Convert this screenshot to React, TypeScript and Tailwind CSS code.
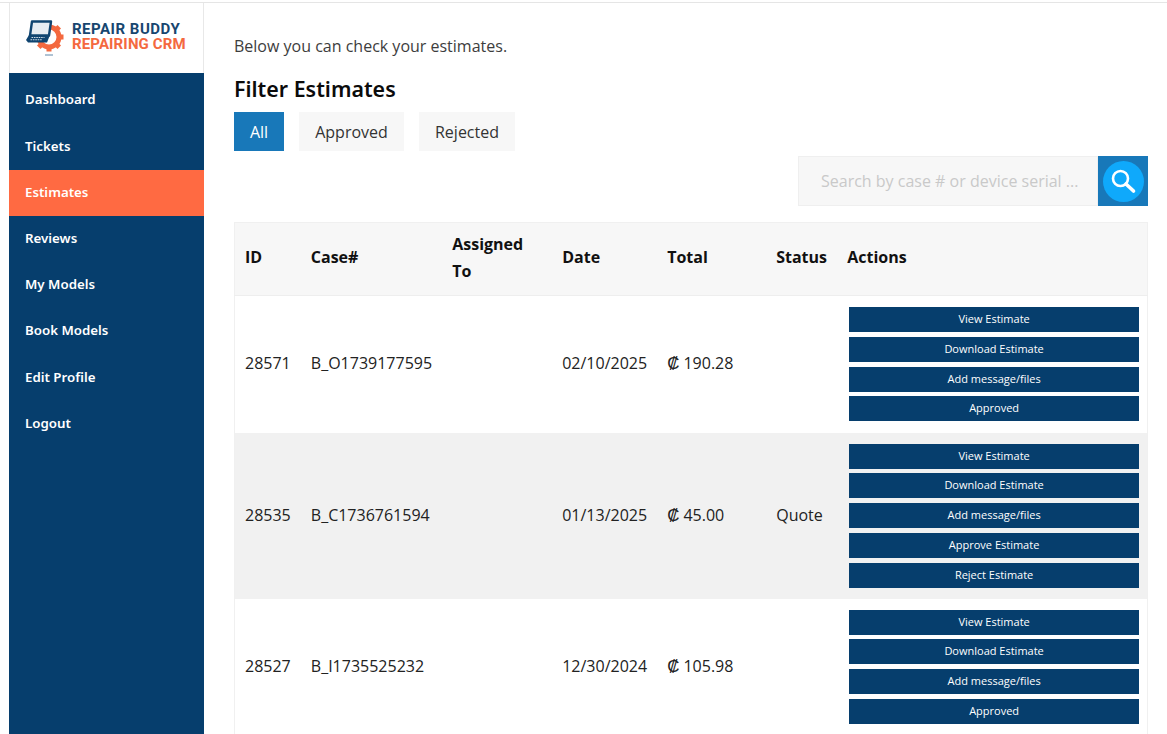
const navItems = ["Dashboard", "Tickets", "Estimates", "Reviews", "My Models", "Book Models", "Edit Profile", "Logout"];

const rows = [
  {
    id: "28571",
    caseNo: "B_O1739177595",
    date: "02/10/2025",
    total: "190.28",
    status: "",
    actions: ["View Estimate", "Download Estimate", "Add message/files", "Approved"],
  },
  {
    id: "28535",
    caseNo: "B_C1736761594",
    date: "01/13/2025",
    total: "45.00",
    status: "Quote",
    actions: ["View Estimate", "Download Estimate", "Add message/files", "Approve Estimate", "Reject Estimate"],
  },
  {
    id: "28527",
    caseNo: "B_I1735525232",
    date: "12/30/2024",
    total: "105.98",
    status: "",
    actions: ["View Estimate", "Download Estimate", "Add message/files", "Approved"],
  },
];

const gearAngles = [0, 45, 90, 135, 180, 225, 270, 315];

function Logo() {
  return (
    <div className="flex items-center gap-[6px]">
      <svg width="41" height="38" viewBox="0 0 41 38" className="shrink-0">
        {/* gear */}
        <circle cx="24" cy="18" r="10" fill="none" stroke="#f4693f" strokeWidth="5" />
        {gearAngles.map((a) => (
          <rect key={a} x="21.5" y="3.5" width="5" height="5" fill="#f4693f" transform={`rotate(${a} 24 18)`} />
        ))}
        {/* laptop */}
        <path d="M7 2.5h19l-2 14H5z" fill="#e6ecf2" stroke="#0f4470" strokeWidth="2.4" strokeLinejoin="round" />
        <path d="M4 16h21l-3 7.5H3L1 21z" fill="#0f4470" />
        <path d="M6.5 18.5h13M5.5 20.8h12" stroke="#cfdbe6" strokeWidth="1.1" strokeDasharray="1.6 0.8" />
        <path d="M20 36h8" stroke="#5f86a8" strokeWidth="1" />
      </svg>
      <div className="font-['Roboto',sans-serif] font-bold text-[15px] leading-[15px] -mt-[2px]">
        <div className="text-[#17466f] tracking-[0.5px]">REPAIR BUDDY</div>
        <div className="text-[#f4693f] tracking-[0.13px]">REPAIRING CRM</div>
      </div>
    </div>
  );
}

export default function App() {
  return (
    <div className="h-screen overflow-hidden bg-white font-['Open_Sans',sans-serif] text-[16px] text-[#222]">
      <div className="h-[2px] bg-white border-t border-[#e5e5e5] mt-[2px] -mb-[1px]" />
      <div className="flex h-full pl-[9px]">
        {/* sidebar */}
        <aside className="w-[195px] shrink-0 bg-[#063e6d]">
          <div className="h-[70px] bg-white border-l border-r border-[#e8e8e8] flex items-center pl-[15px]">
            <Logo />
          </div>
          <nav className="pt-[4.8px] font-['Noto_Sans',sans-serif] font-semibold text-[13.3px] text-white">
            {navItems.map((item) => (
              <div
                key={item}
                className={
                  item === "Estimates"
                    ? "h-[46.2px] flex items-center pl-[16px] pb-[1px] bg-[#ff6a42]"
                    : "h-[46.2px] flex items-center pl-[16px] pb-[1px]"
                }
              >
                {item}
              </div>
            ))}
          </nav>
        </aside>

        {/* main */}
        <main className="flex-1 pl-[30px] pr-[19px] pt-[31px]">
          <p className="text-[16px] leading-[24px] text-[#3d3d3d]">Below you can check your estimates.</p>
          <h2 className="mt-[16px] font-['Noto_Sans',sans-serif] font-semibold text-[21.4px] leading-[30px] text-[#0b0b0b]">
            Filter Estimates
          </h2>
          <div className="mt-[8px] flex gap-[15px]">
            <button className="h-[39px] w-[50px] bg-[#1878b9] text-white">All</button>
            <button className="h-[39px] w-[105px] bg-[#f7f7f7] text-[#333]">Approved</button>
            <button className="h-[39px] w-[96px] bg-[#f7f7f7] text-[#333]">Rejected</button>
          </div>

          <div className="mt-[5px] flex justify-end">
            <div className="h-[50px] w-[300px] bg-[#f7f7f7] border border-[#efefef] flex items-center pl-[22px] text-[#c9c9c9] whitespace-nowrap">
              Search by case # or device serial ...
            </div>
            <div className="h-[50px] w-[50px] bg-[#1878b9] flex items-center justify-center">
              <div className="h-[41px] w-[41px] rounded-full bg-[#0fa9fb] flex items-center justify-center">
                <svg width="28" height="28" viewBox="0 0 28 28" fill="none" stroke="white">
                  <circle cx="11.5" cy="11.5" r="7.5" strokeWidth="2.6" />
                  <path d="M17 17l7.5 7" strokeWidth="3.6" strokeLinecap="round" />
                </svg>
              </div>
            </div>
          </div>

          <table className="mt-[16px] w-[914px] table-fixed border-collapse border border-[#f0f0f0]">
            <colgroup>
              <col className="w-[66.3px]" />
              <col className="w-[141.4px]" />
              <col className="w-[110px]" />
              <col className="w-[105px]" />
              <col className="w-[109px]" />
              <col className="w-[71px]" />
              <col />
            </colgroup>
            <thead>
              <tr className="h-[73px] bg-[#f7f7f7] border-b border-[#eeeeee] text-left text-[#111] leading-[27px]">
                <th className="pl-[10px] pb-[3px] font-bold">ID</th>
                <th className="pl-[10px] pb-[3px] font-bold">Case#</th>
                <th className="pl-[10px] pr-[10px] pb-[2px] font-bold">Assigned To</th>
                <th className="pl-[10px] pb-[3px] font-bold">Date</th>
                <th className="pl-[10px] pb-[3px] font-bold">Total</th>
                <th className="pl-[10px] pb-[3px] font-bold">Status</th>
                <th className="pl-[10px] pb-[3px] font-bold">Actions</th>
              </tr>
            </thead>
            <tbody>
              {rows.map((row, i) => (
                <tr key={row.id} className={i === 1 ? "bg-[#f1f1f1]" : "h-[137px] bg-white"}>
                  <td className="pl-[10px] pb-[2px]">{row.id}</td>
                  <td className="pl-[10px] pb-[2px]">{row.caseNo}</td>
                  <td className="pl-[10px] pb-[2px]"></td>
                  <td className="pl-[10px] pb-[2px]">{row.date}</td>
                  <td className="pl-[10px] pb-[2px]">
                    <span className="font-['Liberation_Sans',sans-serif] text-[17px] leading-[0] mr-[4px]">₡</span>
                    {row.total}
                  </td>
                  <td className="pl-[10px] pb-[2px]">{row.status}</td>
                  <td className="pl-[12px] pr-[8px] pt-[11px] pb-[11px]">
                    <div className="flex flex-col gap-[4.75px]">
                      {row.actions.map((a) => (
                        <button key={a} className="h-[25px] w-full pb-[2px] bg-[#063e6d] text-white text-[11px] leading-[23px]">
                          {a}
                        </button>
                      ))}
                    </div>
                  </td>
                </tr>
              ))}
            </tbody>
          </table>
        </main>
      </div>
    </div>
  );
}
